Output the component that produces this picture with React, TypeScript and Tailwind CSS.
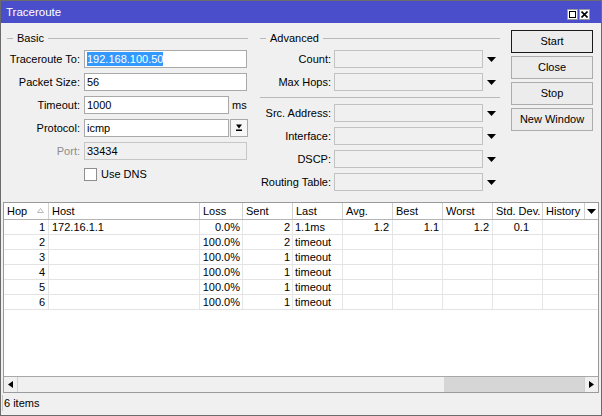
import React from "react";

type Hop = {
  hop: number;
  host: string;
  loss: string;
  sent: number;
  last: string;
  avg: string;
  best: string;
  worst: string;
  dev: string;
};

const hops: Hop[] = [
  { hop: 1, host: "172.16.1.1", loss: "0.0%", sent: 2, last: "1.1ms", avg: "1.2", best: "1.1", worst: "1.2", dev: "0.1" },
  { hop: 2, host: "", loss: "100.0%", sent: 2, last: "timeout", avg: "", best: "", worst: "", dev: "" },
  { hop: 3, host: "", loss: "100.0%", sent: 1, last: "timeout", avg: "", best: "", worst: "", dev: "" },
  { hop: 4, host: "", loss: "100.0%", sent: 1, last: "timeout", avg: "", best: "", worst: "", dev: "" },
  { hop: 5, host: "", loss: "100.0%", sent: 1, last: "timeout", avg: "", best: "", worst: "", dev: "" },
  { hop: 6, host: "", loss: "100.0%", sent: 1, last: "timeout", avg: "", best: "", worst: "", dev: "" },
];

const DownTri = () => (
  <svg width="9" height="5" viewBox="0 0 9 5">
    <path d="M0 0h9L4.5 5z" fill="#000" />
  </svg>
);

function GroupTitle({ label }: { label: string }) {
  return (
    <div className="flex items-center h-[16px]">
      <div className="w-[6px] h-px bg-[#b9b9b9]" />
      <span className="px-[4px] text-black">{label}</span>
      <div className="flex-1 h-px bg-[#b9b9b9]" />
    </div>
  );
}

function Field({
  label,
  value,
  selected,
  muted,
}: {
  label: string;
  value: string;
  selected?: boolean;
  muted?: boolean;
}) {
  return (
    <div className="flex items-center h-[18px] gap-[4px]">
      <span className={`w-[73px] text-right ${muted ? "text-[#8c8c8c]" : "text-black"}`}>{label}</span>
      <div
        className={`w-[163px] h-[18px] border flex items-center pl-[2px] ${
          muted ? "bg-[#f0f0f0] border-[#c6c6c6]" : "bg-white border-[#a9a9a9]"
        }`}
      >
        {selected ? <span className="bg-[#3399ff] text-white leading-[14px]">{value}</span> : <span>{value}</span>}
      </div>
    </div>
  );
}

function AdvField({ label }: { label: string }) {
  return (
    <div className="flex items-center h-[18px]">
      <span className="w-[71px] text-right">{label}</span>
      <div className="ml-[3px] w-[149px] h-[18px] border border-[#c2c2c2] bg-[#f0f0f0]" />
      <div className="w-[17px] flex justify-center">
        <DownTri />
      </div>
    </div>
  );
}

function Btn({ label, active }: { label: string; active?: boolean }) {
  return (
    <div
      className={`h-[23px] w-[82px] flex items-center justify-center bg-[#ececec] border ${
        active ? "border-[#1a1a1a]" : "border-[#acacac]"
      }`}
    >
      {label}
    </div>
  );
}

const headCols = "grid grid-cols-[45px_151px_43px_50px_50px_50px_50px_50px_50px_42px_13px]";
const rowCols = "grid grid-cols-[45px_151px_43px_50px_50px_50px_50px_50px_50px_55px]";

export default function App() {
  const headers = ["Hop", "Host", "Loss", "Sent", "Last", "Avg.", "Best", "Worst", "Std. Dev.", "History"];

  return (
    <div className="w-[602px] h-[416px] bg-[#f0f0f0] border border-[#6b6b6b] flex flex-col font-['Liberation_Sans',Arial,sans-serif] text-[11px] text-black overflow-hidden">
      {/* Title bar */}
      <div className="h-[22px] bg-[#4b4ecb] flex items-center justify-between pl-[5px] pr-[11px] shrink-0">
        <span className="text-white text-[11.5px] mt-[1px]">Traceroute</span>
        <div className="flex gap-[1px] mt-[5px]">
          <div className="w-[11px] h-[11px] bg-white border border-[#9a9a9a] flex items-center justify-center">
            <div className="w-[7px] h-[7px] border border-black" />
          </div>
          <div className="w-[11px] h-[11px] bg-white border border-[#9a9a9a] flex items-center justify-center">
            <svg width="7" height="7" viewBox="0 0 7 7">
              <path d="M0.5 0.5l6 6M6.5 0.5l-6 6" stroke="#000" strokeWidth="1.6" />
            </svg>
          </div>
        </div>
      </div>

      {/* Form area */}
      <div className="h-[179px] shrink-0 flex pt-[7px] pl-[6px]">
        {/* Basic */}
        <div className="w-[241px] flex flex-col">
          <GroupTitle label="Basic" />
          <div className="flex flex-col gap-[5px] pt-[4px]">
            <Field label="Traceroute To:" value="192.168.100.50" selected />
            <Field label="Packet Size:" value="56" />
            <div className="flex items-center h-[18px] gap-[4px]">
              <span className="w-[73px] text-right">Timeout:</span>
              <div className="w-[145px] h-[18px] border border-[#a9a9a9] bg-white flex items-center pl-[2px]">1000</div>
              <span className="ml-[-1px]">ms</span>
            </div>
            <div className="flex items-center h-[18px] gap-[4px]">
              <span className="w-[73px] text-right">Protocol:</span>
              <div className="w-[145px] h-[18px] border border-[#a9a9a9] bg-white flex items-center pl-[2px]">icmp</div>
              <div className="ml-[-3px] w-[18px] h-[18px] border border-[#a9a9a9] bg-[#f7f7f7] flex items-center justify-center">
                <svg width="8" height="8" viewBox="0 0 8 8">
                  <path d="M1 0.5h6L4 4.5z" fill="#000" />
                  <rect x="1" y="5.5" width="6" height="1.5" fill="#000" />
                </svg>
              </div>
            </div>
            <Field label="Port:" value="33434" muted />
          </div>
          <div className="flex items-center h-[17px] mt-[6px] pl-[77px] gap-[4px]">
            <div className="w-[13px] h-[13px] bg-white border border-[#8e8e8e]" />
            <span>Use DNS</span>
          </div>
        </div>

        {/* Advanced */}
        <div className="w-[240px] ml-[12px] flex flex-col">
          <GroupTitle label="Advanced" />
          <div className="flex flex-col gap-[5px] pt-[4px]">
            <AdvField label="Count:" />
            <AdvField label="Max Hops:" />
          </div>
          <div className="h-px bg-[#b9b9b9] mt-[6px] mb-[6px]" />
          <div className="flex flex-col gap-[5px]">
            <AdvField label="Src. Address:" />
            <AdvField label="Interface:" />
            <AdvField label="DSCP:" />
            <AdvField label="Routing Table:" />
          </div>
        </div>

        {/* Buttons */}
        <div className="ml-[11px] flex flex-col gap-[3px]">
          <Btn label="Start" active />
          <Btn label="Close" />
          <Btn label="Stop" />
          <Btn label="New Window" />
        </div>
      </div>

      {/* Table */}
      <div className="h-[191px] shrink-0 ml-[2px] mr-[2px] border border-[#9a9a9a] bg-white flex flex-col">
        <div className={`${headCols} h-[17px] border-b border-[#b4b4b4] shrink-0`}>
          {headers.map((h) => (
            <div key={h} className="relative border-r border-[#d2d2d2] pl-[3px] leading-[16px]">
              {h}
              {h === "Hop" && (
                <svg className="absolute right-[4px] top-[5px]" width="7" height="5" viewBox="0 0 7 5">
                  <path d="M3.5 0.5L6.5 4.5H0.5z" fill="none" stroke="#b8b8b8" strokeWidth="1" />
                </svg>
              )}
            </div>
          ))}
          <div className="flex items-center justify-center">
            <DownTri />
          </div>
        </div>
        <div className="flex-1">
          {hops.map((r) => (
            <div key={r.hop} className={`${rowCols} h-[15px] border-b border-[#e3e3e3] leading-[14px]`}>
              <div className="border-r border-[#e6e6e6] text-right pr-[3px]">{r.hop}</div>
              <div className="border-r border-[#e6e6e6] pl-[3px]">{r.host}</div>
              <div className="border-r border-[#e6e6e6] text-right pr-[2px]">{r.loss}</div>
              <div className="border-r border-[#e6e6e6] text-right pr-[2px]">{r.sent}</div>
              <div className="border-r border-[#e6e6e6] pl-[2px]">{r.last}</div>
              <div className="border-r border-[#e6e6e6] text-right pr-[3px]">{r.avg}</div>
              <div className="border-r border-[#e6e6e6] text-right pr-[3px]">{r.best}</div>
              <div className="border-r border-[#e6e6e6] text-right pr-[3px]">{r.worst}</div>
              <div className="border-r border-[#e6e6e6] text-right pr-[13px]">{r.dev}</div>
              <div />
            </div>
          ))}
        </div>
        {/* Horizontal scrollbar */}
        <div className="h-[16px] shrink-0 border-t border-[#a8a8a8] flex bg-[#f0f0f0]">
          <div className="w-[14px] border-r border-[#d0d0d0] flex items-center justify-center">
            <svg width="5" height="7" viewBox="0 0 5 7">
              <path d="M5 0v7L0 3.5z" fill="#000" />
            </svg>
          </div>
          <div className="w-[426px]" />
          <div className="flex-1 bg-[#d6d6d6]" />
          <div className="w-[14px] border-l border-[#d0d0d0] flex items-center justify-center">
            <svg width="5" height="7" viewBox="0 0 5 7">
              <path d="M0 0v7L5 3.5z" fill="#000" />
            </svg>
          </div>
        </div>
      </div>

      {/* Status bar */}
      <div className="flex-1 flex items-center pl-[1px] pb-[2px]">
        <span className="border-l border-[#c8c8c8] pl-[1px] leading-[16px]">6 items</span>
      </div>
    </div>
  );
}
